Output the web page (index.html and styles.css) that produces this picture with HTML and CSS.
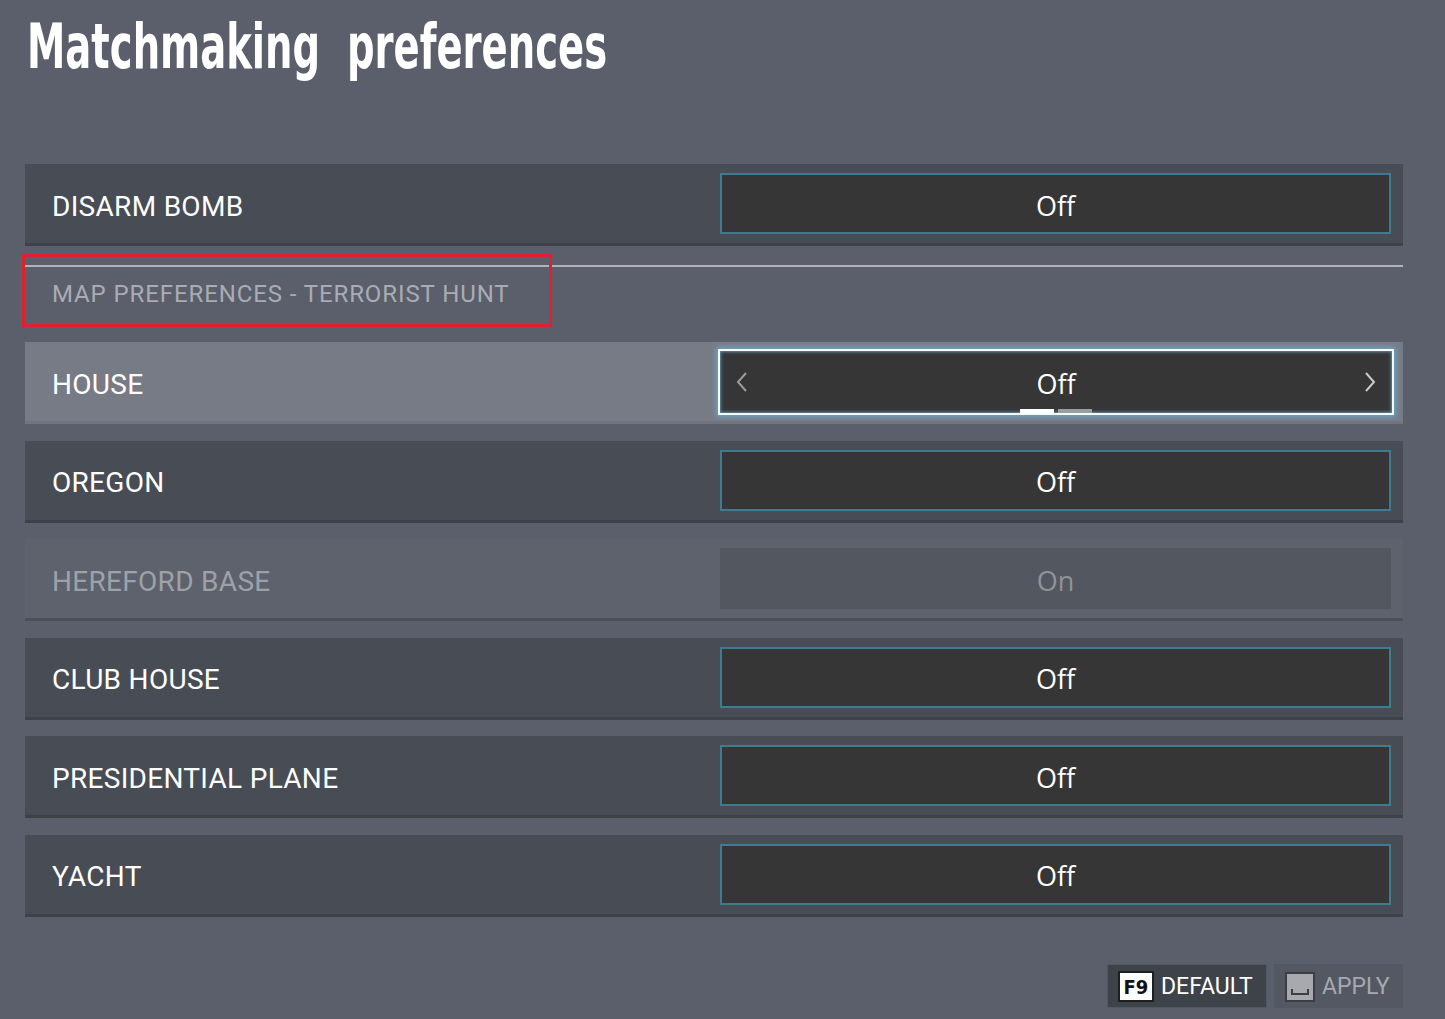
FILE: index.html
```html
<!DOCTYPE html>
<html lang="en">
<head>
<meta charset="utf-8">
<title>Matchmaking preferences</title>
<link rel="stylesheet" href="styles.css">
</head>
<body>
<div class="page">
  <h1 class="title">Matchmaking&nbsp; preferences</h1>

  <div class="row">
    <div class="label">DISARM BOMB</div>
    <div class="value">Off</div>
  </div>

  <div class="section">
    <span class="section-text">MAP PREFERENCES - TERRORIST HUNT</span>
    <span class="highlight"></span>
  </div>

  <div class="rows">
    <div class="row row-selected">
      <div class="label">HOUSE</div>
      <div class="value value-selected">
        <svg class="arrow" width="12" height="20" viewBox="0 0 12 20"><path d="M10 1 L2 10 L10 19" fill="none" stroke="#9a9c9f" stroke-width="2"/></svg>
        <span>Off</span>
        <svg class="arrow" width="12" height="20" viewBox="0 0 12 20"><path d="M2 1 L10 10 L2 19" fill="none" stroke="#c9cacc" stroke-width="2"/></svg>
        <span class="pager"><i class="dot dot-on"></i><i class="dot"></i></span>
      </div>
    </div>
    <div class="row">
      <div class="label">OREGON</div>
      <div class="value">Off</div>
    </div>
    <div class="row row-disabled">
      <div class="label">HEREFORD BASE</div>
      <div class="value value-disabled">On</div>
    </div>
    <div class="row">
      <div class="label">CLUB HOUSE</div>
      <div class="value">Off</div>
    </div>
    <div class="row">
      <div class="label">PRESIDENTIAL PLANE</div>
      <div class="value">Off</div>
    </div>
    <div class="row">
      <div class="label">YACHT</div>
      <div class="value">Off</div>
    </div>
  </div>

  <div class="footer">
    <div class="btn btn-default">
      <span class="key">F9</span>
      <span class="btn-text">DEFAULT</span>
    </div>
    <div class="btn btn-apply">
      <span class="key key-space"><svg width="18" height="8" viewBox="0 0 18 8"><path d="M1 1 V6 H17 V1" fill="none" stroke="#3b3e45" stroke-width="2"/></svg></span>
      <span class="btn-text">APPLY</span>
    </div>
  </div>
</div>
</body>
</html>
```

FILE: styles.css
```css
html, body {
  margin: 0;
  padding: 0;
  background: #5b5f6b;
}

body {
  width: 1445px;
  height: 1019px;
  overflow: hidden;
  font-family: Roboto, "Liberation Sans", sans-serif;
  color: #ffffff;
}

.page {
  padding: 15px 42px 0 25px;
}

.title {
  margin: 0 0 86px 2px;
  height: 63px;
  font-family: "Liberation Sans Narrow", "DejaVu Sans Condensed", "Liberation Sans", sans-serif;
  font-weight: 700;
  font-size: 63px;
  line-height: 63px;
  white-space: nowrap;
  transform: scaleX(0.68);
  transform-origin: left center;
  color: #ffffff;
}

.row {
  display: flex;
  align-items: center;
  height: 79px;
  background: #474c55;
  border-bottom: 3px solid #3d4148;
}

.label {
  flex: 1;
  padding-left: 27px;
  padding-top: 5px;
  font-size: 28px;
  letter-spacing: 0.3px;
  color: #ffffff;
}

.value {
  position: relative;
  box-sizing: border-box;
  width: 671px;
  height: 61px;
  margin-right: 12px;
  padding-top: 3px;
  display: flex;
  align-items: center;
  justify-content: center;
  background: #363636;
  border: 2px solid #3f7a92;
  font-family: "Open Sans", "Noto Sans", sans-serif;
  font-size: 27px;
  color: #ffffff;
}

.section {
  position: relative;
  margin-top: 19px;
  height: 57px;
  border-top: 2px solid #b2b4b9;
  padding-left: 27px;
  display: flex;
  align-items: center;
}

.section-text {
  margin-top: -4px;
  font-size: 24px;
  letter-spacing: 0.9px;
  color: #a9acb3;
}

.highlight {
  position: absolute;
  left: -3px;
  top: -13px;
  width: 524px;
  height: 67px;
  border: 3px solid #e0202b;
}

.rows {
  margin-top: 18px;
  display: flex;
  flex-direction: column;
  gap: 16.5px;
}

.row-selected {
  background: #777b85;
  border-bottom-color: #70747e;
}

.value-selected {
  width: 676px;
  height: 66px;
  margin-right: 9px;
  border: 2px solid #f4fbff;
  box-shadow: 0 0 5px 2px #6fa3c0, inset 0 0 3px 1px #5d93b0;
  justify-content: space-between;
  padding: 3px 16px 0;
}

.value-selected .arrow {
  display: block;
  margin-top: -3px;
}

.pager {
  position: absolute;
  left: 50%;
  bottom: 0;
  transform: translateX(-36px);
  display: flex;
  gap: 4px;
}

.dot {
  display: block;
  width: 34px;
  height: 4px;
  background: #9a9ca0;
}

.dot-on {
  background: #ffffff;
}

.row-disabled {
  background: #5e626d;
  border-bottom-color: #4b4f58;
}

.row-disabled .label {
  color: #9da1a8;
}

.value-disabled {
  background: #53575f;
  border-color: #53575f;
  color: #8f939a;
}

.footer {
  margin-top: 47px;
  display: flex;
  justify-content: flex-end;
  align-items: center;
  gap: 7px;
}

.btn {
  box-sizing: border-box;
  height: 44px;
  display: flex;
  align-items: center;
  gap: 7px;
  padding: 2px 10px 0;
}

.btn-default {
  width: 160px;
  background: #3e4249;
  border: 1px solid #4c5a66;
}

.btn-apply {
  width: 129px;
  background: #545862;
  padding-left: 11px;
}

.key {
  box-sizing: border-box;
  width: 36px;
  height: 31px;
  display: flex;
  align-items: center;
  justify-content: center;
  background: #ffffff;
  border: 2px solid #1e1f22;
  font-family: "Liberation Sans Narrow", "DejaVu Sans Condensed", sans-serif;
  font-weight: 700;
  font-size: 20px;
  color: #111111;
}

.key-space {
  width: 30px;
  height: 30px;
  background: #a7a9ae;
  border-color: #3b3e45;
  align-items: flex-end;
  padding-bottom: 4px;
}

.btn-text {
  font-size: 23px;
  color: #ffffff;
}

.btn-apply .btn-text {
  color: #a6a9b0;
}
```
